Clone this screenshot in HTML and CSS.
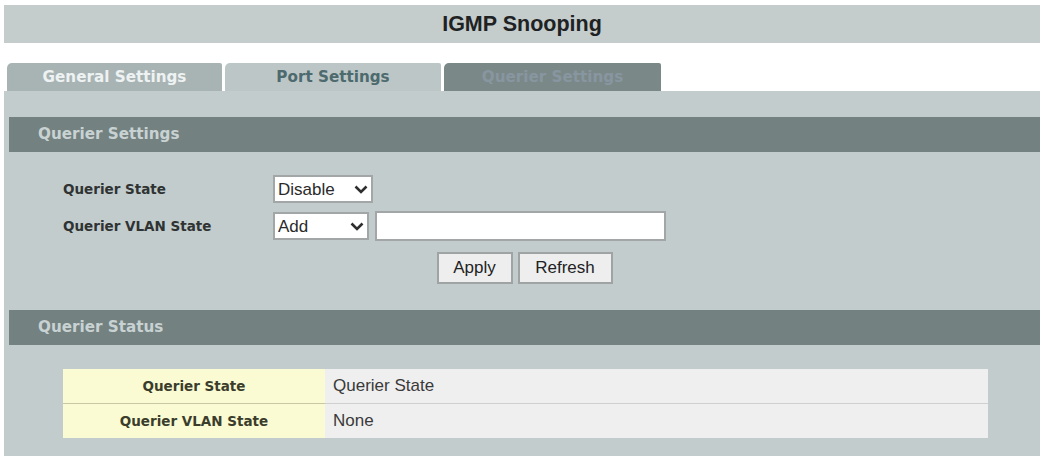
FILE: index.html
```html
<!DOCTYPE html>
<html lang="en">
<head>
    <meta charset="UTF-8">
    <title>IGMP Snooping</title>
    <link rel="stylesheet" href="styles.css">
</head>
<body>

    <div class="title">IGMP Snooping</div>

    <div class="tabs">
        <div class="tab tab-general">General Settings</div>
        <div class="tab tab-port">Port Settings</div>
        <div class="tab tab-querier">Querier Settings</div>
    </div>

    <div class="panel">
        <div class="section-head">Querier Settings</div>

        <div class="form">
            <div class="form-row">
                <label class="label">Querier State</label>
                <span class="select-wrap select-state">
                    <select class="select">
                        <option>Disable</option>
                        <option>Enable</option>
                    </select>
                    <svg class="chevron" width="14" height="9" viewBox="0 0 14 9"><path d="M1.5 1.5 L7 7 L12.5 1.5" fill="none" stroke="#2e2e2e" stroke-width="2.6"/></svg>
                </span>
            </div>
            <div class="form-row">
                <label class="label">Querier VLAN State</label>
                <span class="select-wrap select-vlan">
                    <select class="select">
                        <option>Add</option>
                        <option>Delete</option>
                    </select>
                    <svg class="chevron" width="14" height="9" viewBox="0 0 14 9"><path d="M1.5 1.5 L7 7 L12.5 1.5" fill="none" stroke="#2e2e2e" stroke-width="2.6"/></svg>
                </span>
                <input class="text-input" type="text">
            </div>
            <div class="buttons">
                <button class="btn btn-apply">Apply</button>
                <button class="btn btn-refresh">Refresh</button>
            </div>
        </div>

        <div class="section-head">Querier Status</div>

        <table class="status">
            <tr>
                <th>Querier State</th>
                <td>Querier State</td>
            </tr>
            <tr>
                <th>Querier VLAN State</th>
                <td>None</td>
            </tr>
        </table>
    </div>

</body>
</html>
```

FILE: styles.css
```css
body {
    margin: 0;
    padding: 5px 3px 0 4px;
    background: #ffffff;
    font-family: "Liberation Sans", Arial, sans-serif;
    overflow: hidden;
}
.title {
    height: 38px;
    line-height: 38px;
    background: #c4cccc;
    text-align: center;
    font-size: 21.5px;
    font-weight: bold;
    color: #1e2222;
}
.tabs {
    display: flex;
    gap: 3px;
    margin-top: 20px;
    padding-left: 3px;
}
.tab {
    height: 28px;
    line-height: 28px;
    text-align: center;
    font-family: "DejaVu Sans", Verdana, sans-serif;
    font-size: 15.2px;
    font-weight: bold;
    border-radius: 5px 2px 0 0;
}
.tab-general {
    width: 215px;
    background: #a8b4b4;
    color: #eef2f2;
}
.tab-port {
    width: 216px;
    background: #bcc6c6;
    color: #4d6a6e;
}
.tab-querier {
    width: 217px;
    background: #7b8888;
    color: #8796a0;
}
.panel {
    background: #c3cccc;
    padding: 26px 0 30px 5px;
}
.section-head {
    height: 35px;
    line-height: 35px;
    padding-left: 29px;
    background: #738181;
    color: #c9d2d2;
    font-family: "DejaVu Sans", Verdana, sans-serif;
    font-size: 15.2px;
    font-weight: bold;
}
.form {
    padding: 23px 0 26px 54px;
}
.form-row {
    display: flex;
    align-items: center;
    margin-bottom: 8px;
}
.label {
    width: 210px;
    font-family: "DejaVu Sans", Verdana, sans-serif;
    font-size: 13.5px;
    font-weight: bold;
    color: #2f3333;
}
.select-wrap {
    position: relative;
    display: inline-block;
}
.select {
    -webkit-appearance: none;
    appearance: none;
    height: 28px;
    padding: 0 0 0 3px;
    border: 2px solid #a3a6a6;
    background: #ffffff;
    font-family: "Liberation Sans", Arial, sans-serif;
    font-size: 17px;
    color: #2a2a2a;
    border-radius: 0;
    outline: none;
}
.select-state .select {
    width: 100px;
}
.select-vlan .select {
    width: 96px;
}
.chevron {
    position: absolute;
    top: 10px;
    right: 5px;
    pointer-events: none;
}
.text-input {
    width: 291px;
    height: 30px;
    box-sizing: border-box;
    margin-left: 6px;
    border: 2px solid #a3a6a6;
    background: #ffffff;
    outline: none;
}
.buttons {
    display: flex;
    justify-content: center;
    gap: 5px;
    padding-right: 54px;
    margin-top: 11px;
}
.btn {
    height: 32px;
    border: 2px solid #9fa3a3;
    background: #eeeeee;
    font-family: "Liberation Sans", Arial, sans-serif;
    font-size: 17px;
    color: #222222;
    padding: 0;
}
.btn-apply {
    width: 76px;
}
.btn-refresh {
    width: 95px;
}
.status {
    margin: 24px 0 0 54px;
    width: 925px;
    border-collapse: collapse;
}
.status th {
    width: 262px;
    height: 34px;
    background: #fafbd2;
    font-family: "DejaVu Sans", Verdana, sans-serif;
    font-size: 13.5px;
    font-weight: bold;
    color: #3b3d2c;
    text-align: center;
    padding: 0;
}
.status td {
    background: #efefef;
    font-size: 17px;
    color: #3a3a3a;
    padding: 0 0 0 8px;
}
.status tr + tr th {
    border-top: 1px solid #c9c8a6;
}
.status tr + tr td {
    border-top: 1px solid #cfcfcf;
}
```
